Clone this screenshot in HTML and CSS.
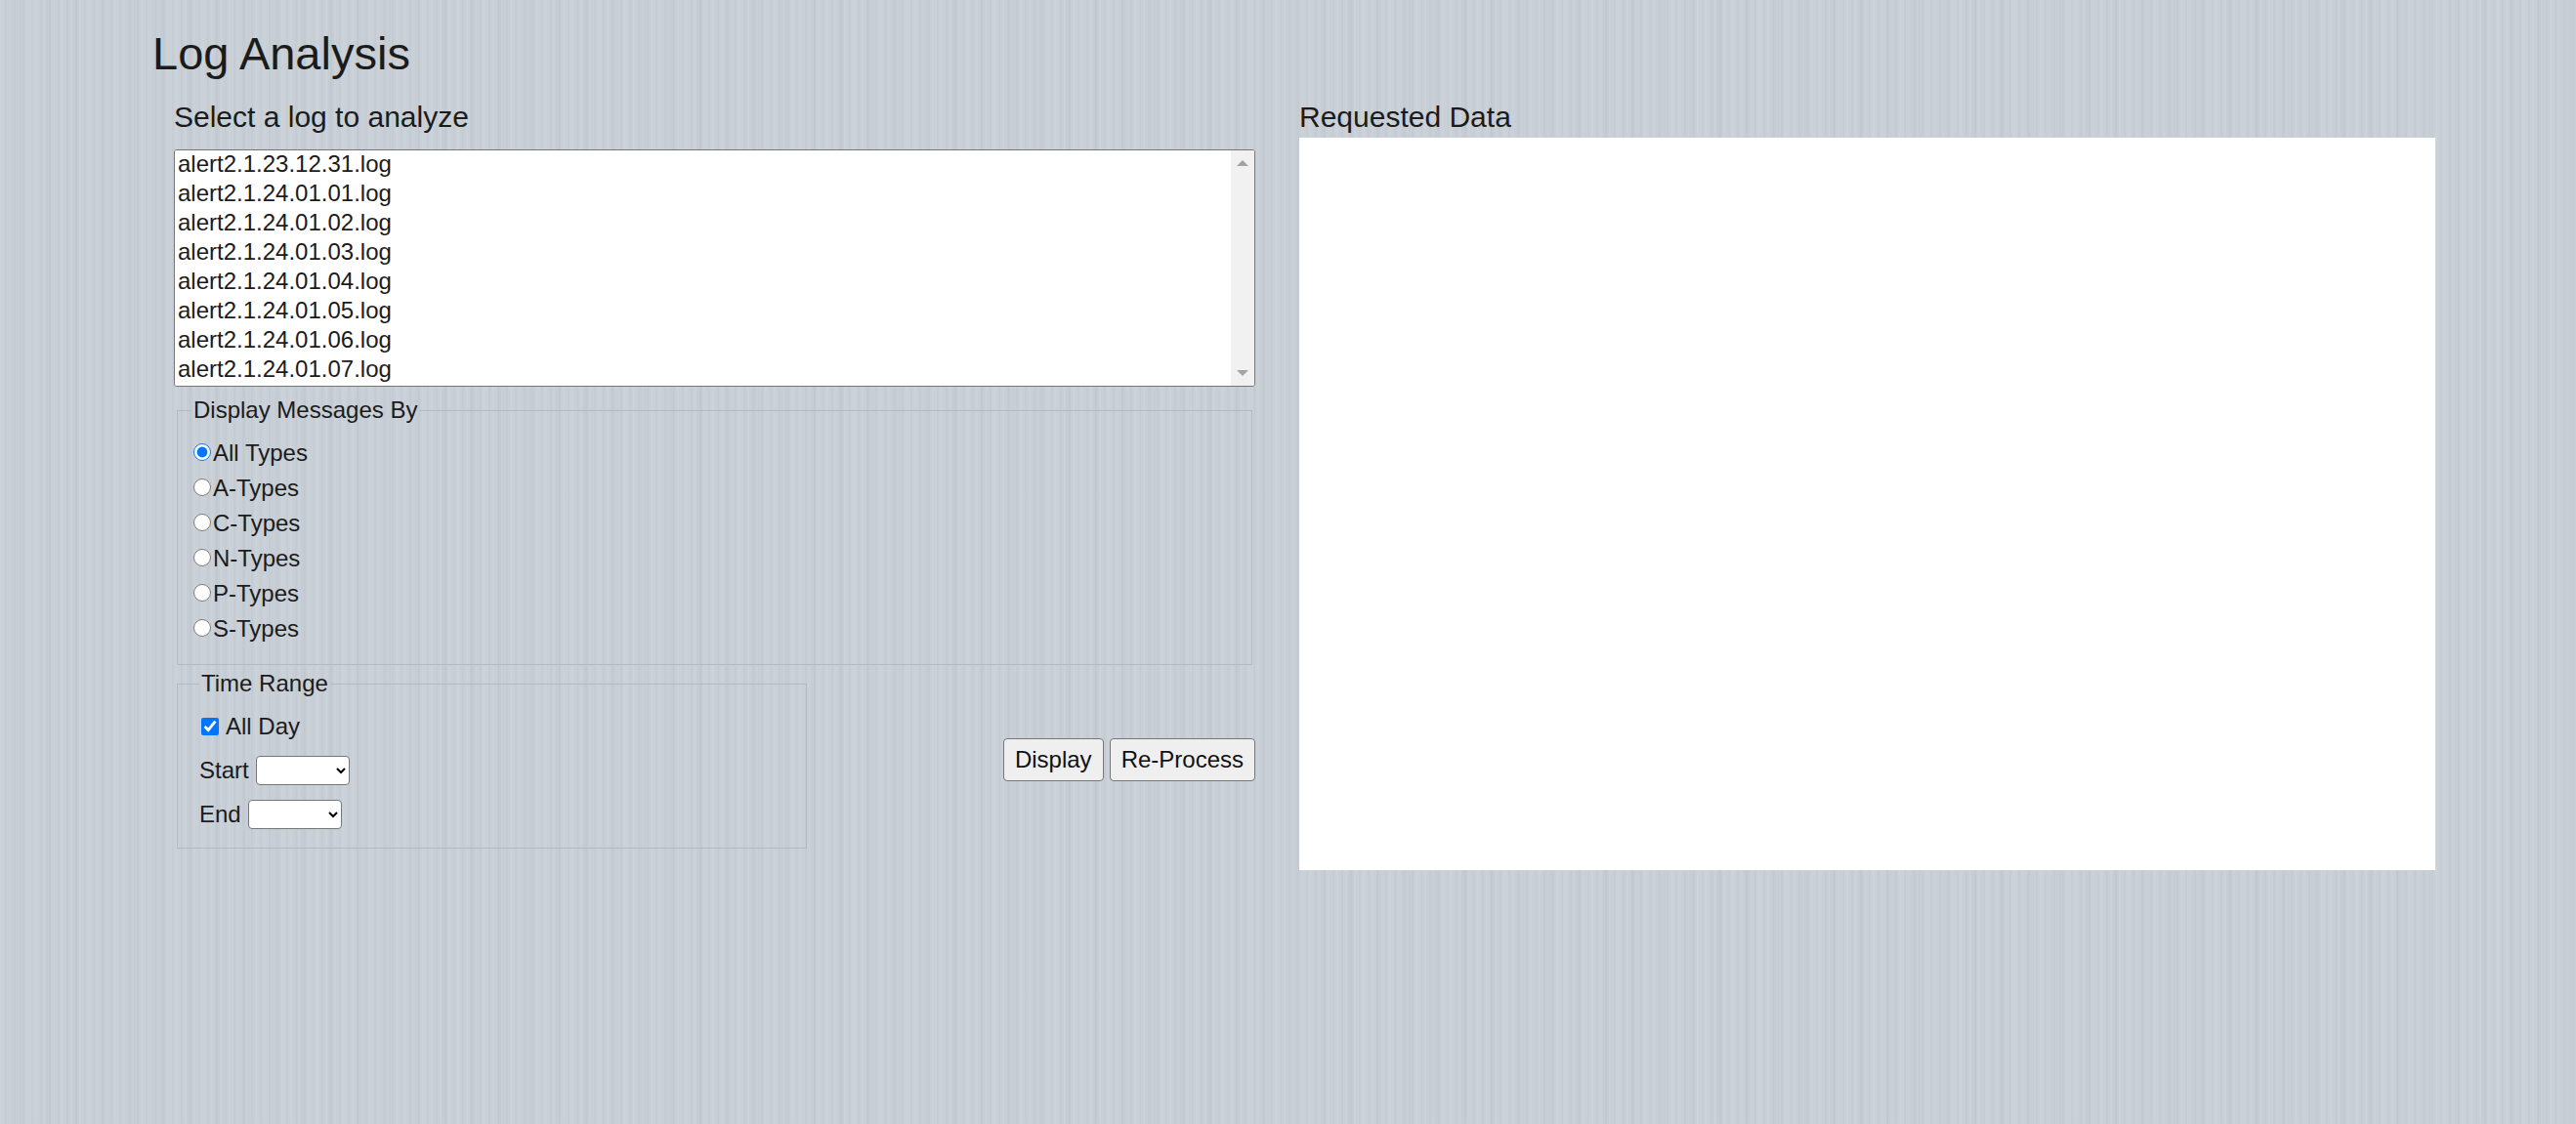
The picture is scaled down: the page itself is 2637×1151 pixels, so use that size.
FILE: index.html
```html
<!DOCTYPE html>
<html lang="en">
<head>
    <meta charset="UTF-8">
    <meta name="viewport" content="width=device-width, initial-scale=1.0">
    <title>Log Analysis</title>
    <link rel="stylesheet" href="styles.css">
</head>
<body>
    <div class="page">
        <h1>Log Analysis</h1>

        <div class="columns">
            <!-- Log picker and filters -->
            <section class="picker">
                <h2>Select a log to analyze</h2>
                <div class="list-wrap">
                    <select class="log-list" id="log-list" size="8">
                        <option>alert2.1.23.12.31.log</option>
                        <option>alert2.1.24.01.01.log</option>
                        <option>alert2.1.24.01.02.log</option>
                        <option>alert2.1.24.01.03.log</option>
                        <option>alert2.1.24.01.04.log</option>
                        <option>alert2.1.24.01.05.log</option>
                        <option>alert2.1.24.01.06.log</option>
                        <option>alert2.1.24.01.07.log</option>
                        <option>alert2.1.24.01.08.log</option>
                        <option>alert2.1.24.01.09.log</option>
                        <option>alert2.1.24.01.10.log</option>
                        <option>alert2.1.24.01.11.log</option>
                        <option>alert2.1.24.01.12.log</option>
                        <option>alert2.1.24.01.13.log</option>
                        <option>alert2.1.24.01.14.log</option>
                        <option>alert2.1.24.01.15.log</option>
                        <option>alert2.1.24.01.16.log</option>
                        <option>alert2.1.24.01.17.log</option>
                        <option>alert2.1.24.01.18.log</option>
                        <option>alert2.1.24.01.19.log</option>
                        <option>alert2.1.24.01.20.log</option>
                    </select>
                    <!-- scrollbar drawn by hand so it shows the same everywhere -->
                    <div class="scrollbar">
                        <span class="arrow up"></span>
                        <span class="arrow down"></span>
                    </div>
                </div>

                <fieldset class="msg-types">
                    <legend>Display Messages By</legend>
                    <label class="type"><input type="radio" name="type" value="all" checked>All Types</label>
                    <label class="type"><input type="radio" name="type" value="A">A-Types</label>
                    <label class="type"><input type="radio" name="type" value="C">C-Types</label>
                    <label class="type"><input type="radio" name="type" value="N">N-Types</label>
                    <label class="type"><input type="radio" name="type" value="P">P-Types</label>
                    <label class="type"><input type="radio" name="type" value="S">S-Types</label>
                </fieldset>

                <div class="controls">
                    <fieldset class="time-range">
                        <legend>Time Range</legend>
                        <label class="row"><input type="checkbox" id="all-day" checked>All Day</label>
                        <div class="row">
                            <label for="start">Start</label>
                            <select class="hour" id="start"></select>
                        </div>
                        <div class="row">
                            <label for="end">End</label>
                            <select class="hour" id="end"></select>
                        </div>
                    </fieldset>
                    <div class="actions">
                        <button type="button" id="display">Display</button>
                        <button type="button" id="reprocess">Re-Process</button>
                    </div>
                </div>
            </section>

            <!-- Output -->
            <section class="output">
                <h2>Requested Data</h2>
                <div class="data-box" id="data-box"></div>
            </section>
        </div>
    </div>
</body>
</html>
```

FILE: styles.css
```css
html {
    min-height: 100%;
}
body {
    margin: 0;
    font-family: "Liberation Sans", Arial, sans-serif;
    color: #1b1b1b;
    background-color: #c8cfd6;
    background-image:
        repeating-linear-gradient(90deg, rgba(255, 255, 255, 0.06) 0 2px, transparent 2px 5px, rgba(0, 0, 0, 0.02) 5px 7px, transparent 7px 9px),
        repeating-linear-gradient(90deg, rgba(255, 255, 255, 0.03) 0 7px, transparent 7px 17px, rgba(60, 70, 80, 0.02) 17px 23px, transparent 23px 29px);
}
.page {
    padding: 28px 0 0 153px;
}
h1 {
    margin: 0 0 21px 3px;
    font-size: 47px;
    font-weight: normal;
    line-height: 53px;
}
h2 {
    margin: 0;
    font-size: 30px;
    font-weight: normal;
    line-height: 35px;
}
.columns {
    display: flex;
    align-items: flex-start;
    gap: 45px;
    margin-left: 25px;
}
.picker {
    width: 1107px;
}
.picker h2 {
    margin-bottom: 16px;
}
.output {
    width: 1163px;
}
.output h2 {
    margin-bottom: 4px;
}
.data-box {
    height: 750px;
    background: #fff;
}

/* log list */
.list-wrap {
    position: relative;
}
.log-list {
    display: block;
    box-sizing: border-box;
    width: 100%;
    height: 243px;
    padding: 0;
    border: 1px solid #767676;
    border-radius: 3px;
    background: #fff;
    color: #1b1b1b;
    font-family: "Liberation Sans", Arial, sans-serif;
    font-size: 24px;
    outline: none;
    scrollbar-width: none;
}
.log-list option {
    padding: 0 3px;
    height: 30px;
    line-height: 30px;
}
.scrollbar {
    position: absolute;
    top: 1px;
    right: 1px;
    bottom: 1px;
    width: 24px;
    box-sizing: border-box;
    padding: 10px 0;
    display: flex;
    flex-direction: column;
    justify-content: space-between;
    align-items: center;
    background: #f1f1f1;
    border-radius: 0 2px 2px 0;
    pointer-events: none;
}
.arrow {
    width: 0;
    height: 0;
    border-left: 6px solid transparent;
    border-right: 6px solid transparent;
}
.arrow.up {
    border-bottom: 6px solid #a3a3a3;
}
.arrow.down {
    border-top: 6px solid #a3a3a3;
}

/* fieldsets */
fieldset {
    min-width: 0;
    border: 1px solid #b3bac2;
    font-size: 24px;
}
legend {
    padding: 0 2px;
}
.msg-types {
    margin: 10px 3px 0;
    padding: 12px 12px 18px 14px;
}
.type {
    display: block;
    height: 36px;
    line-height: 36px;
}
.type input {
    width: 18px;
    height: 18px;
    margin: 0 2px 0 2px;
}
.controls {
    display: flex;
    justify-content: space-between;
    align-items: center;
    margin-top: 5px;
}
.time-range {
    box-sizing: border-box;
    width: 645px;
    margin: 0 0 0 3px;
    padding: 7px 12px 12px 22px;
}
.time-range .row {
    display: flex;
    align-items: center;
    gap: 7px;
    height: 45px;
}
.time-range input[type="checkbox"] {
    width: 18px;
    height: 18px;
    margin: 0 0 0 2px;
}
.hour {
    box-sizing: border-box;
    width: 96px;
    height: 30px;
    border: 1px solid #767676;
    border-radius: 4px;
    background: #fff;
    font-family: "Liberation Sans", Arial, sans-serif;
    font-size: 20px;
}

/* buttons */
.actions {
    display: flex;
    gap: 6px;
}
.actions button {
    padding: 7px 11px;
    border: 1px solid #767676;
    border-radius: 4px;
    background: #efefef;
    color: #111;
    font-family: "Liberation Sans", Arial, sans-serif;
    font-size: 24px;
    cursor: pointer;
}
.actions button:hover {
    background: #e5e5e5;
}
```
